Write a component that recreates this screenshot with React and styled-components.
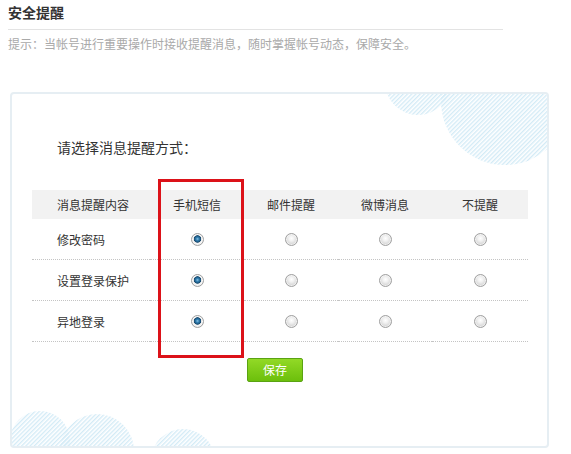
import React from 'react'
import styled, { createGlobalStyle } from 'styled-components'

const GlobalStyle = createGlobalStyle`
  html, body {
    margin: 0;
    padding: 0;
    background: #fff;
  }
  body {
    font-family: "Noto Sans CJK SC", "Liberation Sans", sans-serif;
    font-size: 12px;
    color: #333;
  }
`

const Page = styled.div`
  padding: 2px 0 0 8px;
  width: 541px;
`

const Header = styled.div`
  width: 495px;
`

const Title = styled.h2`
  margin: 0;
  padding: 0 0 7px;
  font-size: 14px;
  line-height: 20px;
  font-weight: bold;
  color: #333;
  border-bottom: 1px solid #e3e3e3;
`

const Hint = styled.p`
  margin: 4px 0 0;
  line-height: 20px;
  font-size: 12px;
  color: #a9a9a9;
`

const Panel = styled.div`
  position: relative;
  margin: 38px 0 0 2px;
  width: 535px;
  height: 352px;
  border: 2px solid #e6eef3;
  border-radius: 4px;
  background: #fff;
  overflow: hidden;
`

const Clouds = styled.svg`
  position: absolute;
  left: 0;
  top: 0;
  width: 100%;
  height: 100%;
  z-index: 0;
`

const Content = styled.div`
  position: relative;
  z-index: 1;
  padding: 43px 19px 0 20px;
`

const Question = styled.h3`
  margin: 0 0 33px 25px;
  font-size: 14px;
  line-height: 20px;
  font-weight: normal;
  color: #333;
`

const TableWrap = styled.div`
  position: relative;
  width: 496px;
`

const Table = styled.table`
  width: 496px;
  border-collapse: collapse;
  table-layout: fixed;
`

const HeadCell = styled.th`
  height: 29px;
  padding: 0;
  background: #f2f2f2;
  font-weight: normal;
  font-size: 12px;
  color: #333;
  text-align: ${(p) => (p.$first ? 'left' : 'center')};
  padding-left: ${(p) => (p.$first ? '25px' : '0')};
`

const Cell = styled.td`
  height: 40px;
  padding: 0;
  border-bottom: 1px dotted #c4c4c4;
  text-align: ${(p) => (p.$first ? 'left' : 'center')};
  padding-left: ${(p) => (p.$first ? '25px' : '0')};
  color: #333;
  font-size: 12px;
`

const Radio = styled.input.attrs({ type: 'radio' })`
  appearance: none;
  -webkit-appearance: none;
  margin: 0 0 2px;
  width: 13px;
  height: 13px;
  border-radius: 50%;
  vertical-align: middle;
  border: 1px solid #a2a2a2;
  background: ${(p) =>
    p.checked
      ? 'radial-gradient(circle at 50% 45%, #8fc2e2 0, #3482b4 1.5px, #174a70 3.4px, #e4e4e4 4px, #f6f6f6 4.8px, #cfcfcf 6px)'
      : 'radial-gradient(circle at 50% 40%, #ffffff 0, #f2f2f2 2.5px, #d4d4d4 6px)'};
  box-shadow: inset 0 0 0 1px rgba(255, 255, 255, 0.6);
`

const Highlight = styled.div`
  position: absolute;
  left: 126px;
  top: -11px;
  width: 80px;
  height: 173px;
  border: 3px solid #dc1219;
  pointer-events: none;
`

const Actions = styled.div`
  padding: 16px 0 0 215px;
`

const SaveButton = styled.button`
  width: 56px;
  height: 24px;
  padding: 0;
  border: 1px solid #5aa312;
  border-radius: 2px;
  background: linear-gradient(#92d926, #6cbf0c);
  color: #fff;
  font-family: "Noto Sans CJK SC", sans-serif;
  font-size: 12px;
  line-height: 22px;
  cursor: pointer;
`

const columns = ['手机短信', '邮件提醒', '微博消息', '不提醒']
const rows = ['修改密码', '设置登录保护', '异地登录']

function CloudDecor() {
  return (
    <Clouds viewBox="0 0 535 352" preserveAspectRatio="none">
      <defs>
        <pattern
          id="stripes"
          width="3"
          height="3"
          patternUnits="userSpaceOnUse"
          patternTransform="rotate(45)"
        >
          <rect width="1.4" height="3" fill="#d3ebf6" />
        </pattern>
      </defs>
      <g fill="url(#stripes)">
        <circle cx="406" cy="-12" r="33" />
        <circle cx="493" cy="7" r="64" />
        <circle cx="28" cy="347" r="30" />
        <circle cx="85" cy="357" r="37" />
        <circle cx="171" cy="367" r="32" />
      </g>
    </Clouds>
  )
}

export default function App() {
  return (
    <>
      <GlobalStyle />
      <Page>
        <Header>
          <Title>安全提醒</Title>
          <Hint>提示：当帐号进行重要操作时接收提醒消息，随时掌握帐号动态，保障安全。</Hint>
        </Header>

        <Panel>
          <CloudDecor />
          <Content>
            <Question>请选择消息提醒方式：</Question>

            <TableWrap>
              <Table>
                <colgroup>
                  <col style={{ width: 118 }} />
                  <col style={{ width: 94 }} />
                  <col style={{ width: 94 }} />
                  <col style={{ width: 94 }} />
                  <col style={{ width: 96 }} />
                </colgroup>
                <thead>
                  <tr>
                    <HeadCell $first>消息提醒内容</HeadCell>
                    {columns.map((c) => (
                      <HeadCell key={c}>{c}</HeadCell>
                    ))}
                  </tr>
                </thead>
                <tbody>
                  {rows.map((r) => (
                    <tr key={r}>
                      <Cell $first>{r}</Cell>
                      {columns.map((c, i) => (
                        <Cell key={c}>
                          <Radio name={r} checked={i === 0} readOnly />
                        </Cell>
                      ))}
                    </tr>
                  ))}
                </tbody>
              </Table>
              <Highlight />
            </TableWrap>

            <Actions>
              <SaveButton>保存</SaveButton>
            </Actions>
          </Content>
        </Panel>
      </Page>
    </>
  )
}
